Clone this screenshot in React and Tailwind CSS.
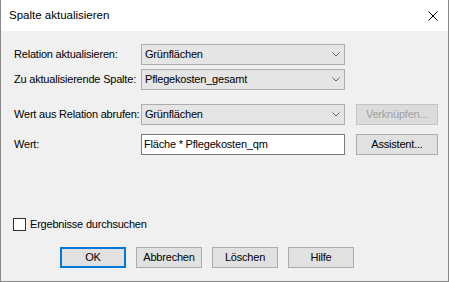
import React from 'react';

const ComboBox = ({ value }) => (
    <div className="flex h-[21px] w-[204px] items-center justify-between border border-[#adadad] bg-[#e5e5e5] pl-[3px] pr-[4px]">
        <span className="leading-none">{value}</span>
        <svg width="8" height="5" viewBox="0 0 8 5">
            <path d="M0.5 0.5 L4 4 L7.5 0.5" fill="none" stroke="#606060" strokeWidth="1" />
        </svg>
    </div>
);

const Button = ({ children, className = '' }) => (
    <button className={`flex h-[21px] items-center justify-center border bg-[#e1e1e1] leading-none ${className}`}>
        {children}
    </button>
);

const App = () => {
    return (
        <div className="flex h-[282px] w-[449px] flex-col border border-t-0 border-[#888888] bg-[#f0f0f0] font-['Liberation_Sans',Arial,sans-serif] text-[11px] tracking-[-0.2px] text-black">
            {/* Title bar */}
            <div className="flex h-[31px] shrink-0 items-center justify-between bg-white pl-[8px] pr-[10px]">
                <span className="text-[11.5px] tracking-normal">Spalte aktualisieren</span>
                <svg width="10" height="10" viewBox="0 0 10 10">
                    <path d="M0.5 0.5 L9.5 9.5 M9.5 0.5 L0.5 9.5" stroke="#000" strokeWidth="1" />
                </svg>
            </div>

            {/* Form */}
            <div className="flex flex-col pl-[13px] pt-[13px]">
                <div className="flex h-[21px] items-center">
                    <span className="w-[127px] whitespace-nowrap">Relation aktualisieren:</span>
                    <ComboBox value="Grünflächen" />
                </div>
                <div className="mt-[4px] flex h-[21px] items-center">
                    <span className="w-[127px] whitespace-nowrap">Zu aktualisierende Spalte:</span>
                    <ComboBox value="Pflegekosten_gesamt" />
                </div>
                <div className="mt-[14px] flex h-[21px] items-center">
                    <span className="w-[127px] whitespace-nowrap">Wert aus Relation abrufen:</span>
                    <ComboBox value="Grünflächen" />
                    <Button className="ml-[11px] w-[82px] border-[#c4c4c4] !bg-[#dcdcdc] text-[#a0a0a0]">Verknüpfen...</Button>
                </div>
                <div className="mt-[9px] flex h-[21px] items-center">
                    <span className="w-[127px] whitespace-nowrap">Wert:</span>
                    <div className="flex h-[21px] w-[204px] items-center border border-[#7a7a7a] bg-white pl-[2px]">
                        <span className="leading-none">Fläche * Pflegekosten_qm</span>
                    </div>
                    <Button className="ml-[11px] w-[82px] border-[#adadad]">Assistent...</Button>
                </div>

                {/* Checkbox */}
                <div className="mt-[63px] flex h-[13px] items-center">
                    <div className="ml-[-1px] h-[13px] w-[13px] border border-[#333333] bg-white" />
                    <span className="ml-[4px] leading-none">Ergebnisse durchsuchen</span>
                </div>

                {/* Buttons */}
                <div className="ml-[46px] mt-[16px] flex gap-[10px]">
                    <Button className="w-[66px] border-2 border-[#0078d7]">OK</Button>
                    <Button className="w-[66px] border-[#adadad]">Abbrechen</Button>
                    <Button className="w-[66px] border-[#adadad]">Löschen</Button>
                    <Button className="w-[66px] border-[#adadad]">Hilfe</Button>
                </div>
            </div>
        </div>
    );
};

export default App;
